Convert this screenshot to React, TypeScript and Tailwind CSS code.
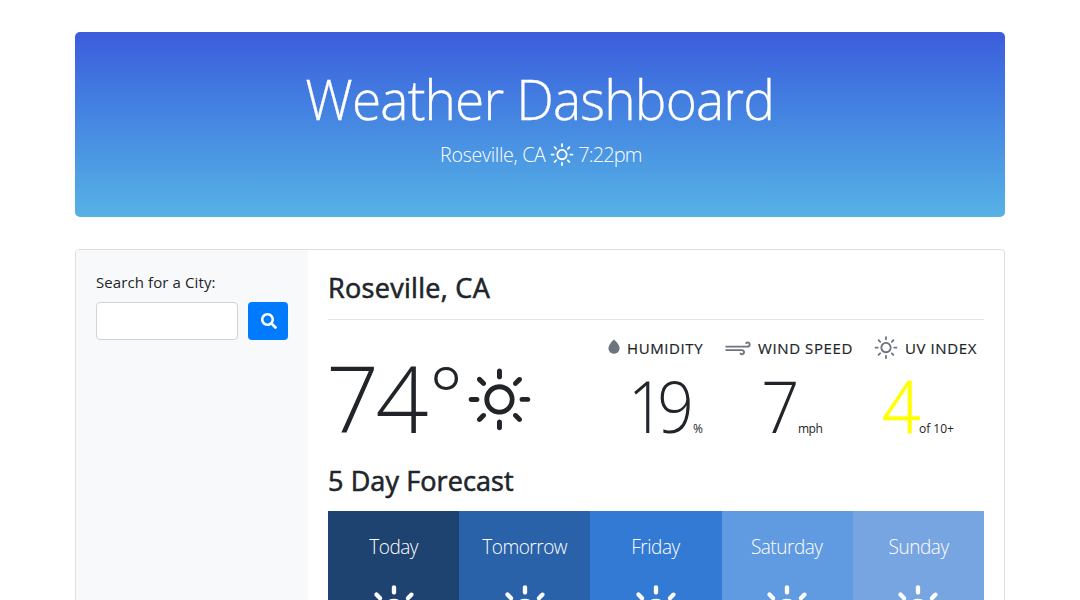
import { FaSearch } from "react-icons/fa";
import { WiDaySunny, WiRaindrop, WiStrongWind } from "react-icons/wi";

const days = [
  { name: "Today", tone: "bg-[#1f4370]" },
  { name: "Tomorrow", tone: "bg-[#2a62a9]" },
  { name: "Friday", tone: "bg-[#337ad5]" },
  { name: "Saturday", tone: "bg-[#609ae0]" },
  { name: "Sunday", tone: "bg-[#77a5e1]" },
];

export default function App() {
  return (
    <div className="h-[600px] overflow-hidden bg-white px-[75px] pt-8 font-['Open_Sans','Noto_Sans',sans-serif] text-[#212529]">
      <header className="flex h-[185px] flex-col items-center rounded-[5px] bg-linear-to-b from-[#3c5cdc] to-[#57b2e5] pt-[33px] text-white">
        <h1 className="h-[67px] scale-x-95 whitespace-nowrap text-[56px] leading-[67px] font-light tracking-[-0.9px] [-webkit-text-stroke:0.3px_white]">
          Weather Dashboard
        </h1>
        <p className="mt-[7px] flex h-[32px] items-center whitespace-nowrap text-[20px] font-light">
          <span className="scale-x-98 tracking-[-0.3px]">Roseville, CA</span>
          <WiDaySunny size={32} />
          <span className="tracking-[-0.9px]">7:22pm</span>
        </p>
      </header>

      <main className="mt-8 flex h-[500px] overflow-hidden rounded-[4px] border border-[#dfdfdf]">
        <aside className="w-[232px] shrink-0 bg-[#f8f9fa] px-5 pt-[20px]">
          <label htmlFor="city" className="block h-6 text-[15px] leading-6 tracking-[0.1px]">
            Search for a City:
          </label>
          <div className="mt-[8px] flex gap-[10px]">
            <input id="city" className="h-[38px] w-[142px] rounded-[4px] border border-[#ced4da] bg-white px-3" />
            <button aria-label="Search" className="flex h-[38px] w-10 items-center justify-center rounded-[4px] bg-[#007bff] text-white">
              <FaSearch size={16} className="ml-px" />
            </button>
          </div>
        </aside>

        <section className="w-[696px] px-5 pt-[21px]">
          <h2 className="h-[34px] text-[27px] leading-[34px] tracking-[0.3px] [-webkit-text-stroke:0.6px_#212529]">
            Roseville, CA
          </h2>
          <hr className="mt-[14px] border-[#e5e5e5]" />
          <div className="flex h-[128px] justify-between">
            <div className="flex">
              <span className="mt-[10px] ml-[-2px] w-[103px] text-[93px] leading-[134px] font-light tracking-[-3.5px]">74</span>
              <span className="mt-[18px] w-[27px] text-[80px] leading-[110px] font-light">°</span>
              <WiDaySunny size={87} className="mt-[37px]" />
            </div>
            <div className="flex pt-[12px]">
              <div className="w-[118px]">
                <div className="flex h-8 items-center text-[15px] whitespace-nowrap [-webkit-text-stroke:0.2px_#212529]">
                  <WiRaindrop size={32} className="-mx-1 text-[#6c757d]" />
                  <span className="ml-px tracking-[0.6px]">HUMIDITY</span>
                </div>
                <div className="flex items-baseline pl-[26px] leading-[84px]">
                  <span className="w-[65px] origin-left scale-x-90 text-[71px] font-light tracking-[-8px]">19</span>
                  <span className="text-[12px]">%</span>
                </div>
              </div>
              <div className="w-[150px]">
                <div className="flex h-8 items-center text-[15px] whitespace-nowrap [-webkit-text-stroke:0.2px_#212529]">
                  <WiStrongWind size={32} className="mr-1 ml-0.5 text-[#6c757d]" />
                  <span className="tracking-[0.6px]">WIND SPEED</span>
                </div>
                <div className="flex items-baseline pl-[41px] leading-[84px]">
                  <span className="w-[37px] origin-left scale-x-95 text-[71px] font-light tracking-[-6px]">7</span>
                  <span className="text-[12px] tracking-[-0.5px]">mph</span>
                </div>
              </div>
              <div className="w-[114px]">
                <div className="flex h-8 items-center text-[15px] whitespace-nowrap [-webkit-text-stroke:0.2px_#212529]">
                  <WiDaySunny size={32} className="mr-0.5 text-[#6c757d]" />
                  <span className="ml-px tracking-[0.6px]">UV INDEX</span>
                </div>
                <div className="flex items-baseline pl-[12px] leading-[84px] whitespace-nowrap">
                  <span className="w-[37px] origin-left scale-x-95 text-[71px] font-light tracking-[-4px] text-[#ffff00] [-webkit-text-stroke:0.6px_#ffff00]">4</span>
                  <span className="text-[12px]">of 10+</span>
                </div>
              </div>
            </div>
          </div>
          <h3 className="mt-[16px] h-[34px] text-[27px] leading-[34px] tracking-[0.1px] [-webkit-text-stroke:0.6px_#212529]">
            5 Day Forecast
          </h3>
          <div className="mt-[13px] grid grid-cols-5 text-white">
            {days.map((day) => (
              <div key={day.name} className={`flex h-[240px] flex-col items-center pt-[20px] ${day.tone}`}>
                <span className="h-8 scale-x-95 text-[20px] leading-8 font-light tracking-[-0.5px]">{day.name}</span>
                <WiDaySunny size={76} className="mt-[12px]" />
              </div>
            ))}
          </div>
        </section>
      </main>
    </div>
  );
}
